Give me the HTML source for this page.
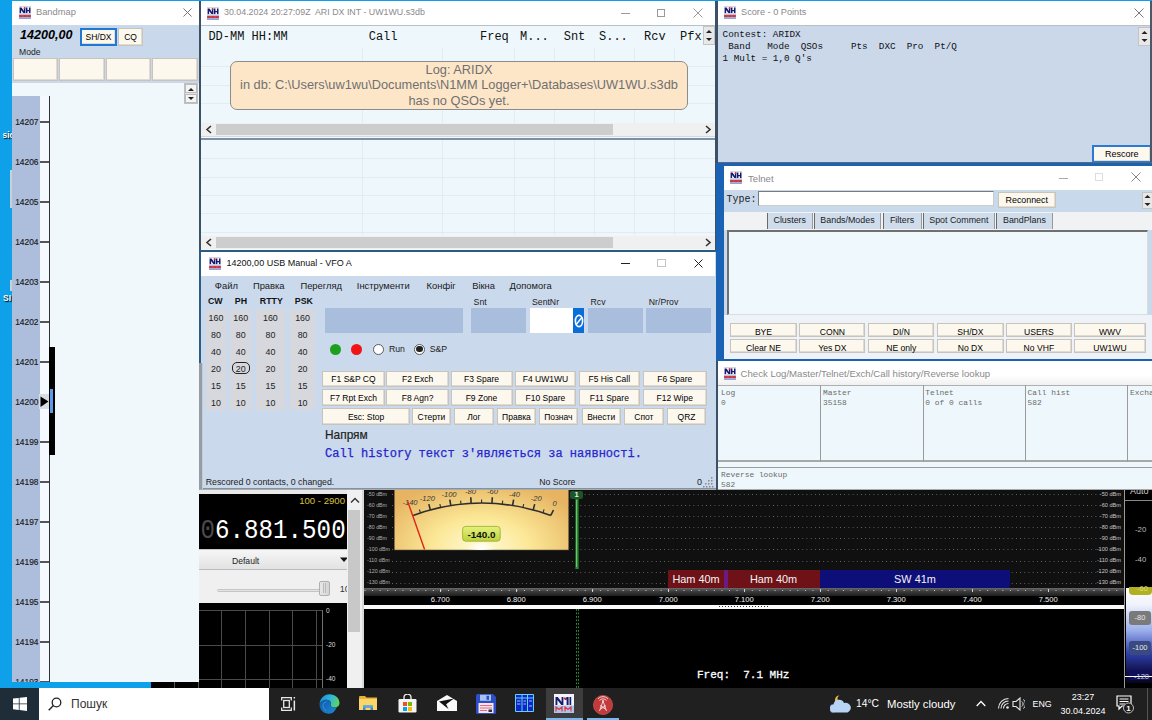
<!DOCTYPE html>
<html><head><meta charset="utf-8">
<style>
*{margin:0;padding:0;box-sizing:border-box}
html,body{width:1152px;height:720px;overflow:hidden}
body{position:relative;background:#0ea0e8;font-family:"Liberation Sans",sans-serif;color:#000}
div,span{position:absolute}
div>svg{display:block}
.m{font-family:"Liberation Mono",monospace}
.tb{background:#fff}
.tt{color:#8a8a8a;font-size:9.2px;white-space:nowrap}
.btn{background:#fcf8ee;border:1px solid #c8c4bc;box-shadow:inset -1px -1px 0 #e0dcd4;text-align:center;white-space:nowrap;color:#000}
.fk{font-size:8.3px;line-height:14px;height:16px}
.p1{padding-top:1px}
.nw{white-space:nowrap}
</style></head><body>

<div class="nw" style="left:2.5px;top:130px;font-size:8.5px;font-weight:bold;color:#fff;text-shadow:1px 1px 1px #000">sic</div>
<div class="nw" style="left:3px;top:293px;font-size:8.5px;font-weight:bold;color:#fff;text-shadow:1px 1px 1px #000">SI</div>
<div style="left:10px;top:170px;width:2px;height:38px;background:#c8d0d8"></div>
<div style="left:10px;top:280px;width:2px;height:11px;background:#c8d0d8"></div>
<!-- ============ BANDMAP ============ -->
<div id="bm" style="left:12px;top:1px;width:187px;height:681px;background:#f0f8fc;overflow:hidden">
  <div class="tb" style="left:0;top:0;width:187px;height:24px"></div>
  <div class="tt" style="left:24px;top:6px;font-size:9.3px">Bandmap</div>
  <div style="left:0;top:24px;width:187px;height:58px;background:#c9d8eb"></div>
  <div class="nw" style="left:8px;top:27px;font-size:12.6px;font-weight:bold;font-style:italic">14200,00</div>
  <div class="btn" style="left:68px;top:27px;width:37px;height:18px;border:2px solid #1e78d6;font-size:8.5px;line-height:14px">SH/DX</div>
  <div class="btn" style="left:106px;top:27px;width:25px;height:18px;font-size:8.5px;line-height:16px">CQ</div>
  <div class="nw" style="left:7px;top:46px;font-size:8.6px;color:#222">Mode</div>
  <div class="btn" style="left:1px;top:57px;width:45px;height:23px"></div>
  <div class="btn" style="left:47px;top:57px;width:46px;height:23px"></div>
  <div class="btn" style="left:94px;top:57px;width:45px;height:23px"></div>
  <div class="btn" style="left:140px;top:57px;width:46px;height:23px"></div>
  <div style="left:0;top:95px;width:28px;height:590px;background:#adbedc"></div>
  <div style="left:28px;top:95px;width:9px;height:590px;background:#f4faff"></div>
  <div style="left:37px;top:95px;width:1px;height:590px;background:#333"></div>
<div style="left:7px;top:5px"><svg width="12" height="13" viewBox="0 0 12 13"><rect width="12" height="13" fill="#f6f6fb"/><rect width="12" height="0.9" fill="#d4d4dc"/><path d="M0.6 7.3V1.6h1.9l2.4 3.3V1.6h1.4v5.7H4.6L2.1 4v3.3z" fill="#141a6e"/><path d="M6.9 7.3V1.6h1.5v2.3h1.6V1.6h1.5v5.7H10V5.3H8.4v2z" fill="#141a6e"/><circle cx="5.6" cy="2.2" r="0.9" fill="#e02a2a"/><rect y="7.3" width="12" height="1.5" fill="#c4d4f0"/><rect y="8.8" width="12" height="2.6" fill="#e04040"/><g fill="#3a3a90"><rect x="1.5" y="9.6" width="1" height="1"/><rect x="5.5" y="9.6" width="1" height="1"/><rect x="9.5" y="9.6" width="1" height="1"/></g><rect y="11.4" width="12" height="1.6" fill="#8aa8e0"/></svg></div>
<svg style="position:absolute;left:171px;top:7px" width="9" height="9"><path d="M0.5 0.5L8.5 8.5M8.5 0.5L0.5 8.5" stroke="#777" stroke-width="1"/></svg>
<div style="left:172px;top:82px;width:14px;height:21px;background:#e4e4e4;border:1px solid #c0c0c0"></div>
<div style="left:173px;top:83px;width:12px;height:9px;background:#f4f4f4;border:1px solid #bbb"></div>
<div style="left:173px;top:93px;width:12px;height:9px;background:#f4f4f4;border:1px solid #bbb"></div>
<svg style="position:absolute;left:175px;top:85px" width="8" height="16"><path d="M1 5L4 2L7 5z" fill="#222"/><path d="M1 11L7 11L4 14z" fill="#222"/></svg>
<div style="left:28px;top:120px;width:9px;height:2px;background:#555"></div>
<div class="nw" style="left:0;top:116px;width:26.5px;text-align:right;font-size:8.4px;line-height:11px;color:#1a1a1a;-webkit-text-stroke:0.15px #1a1a1a">14207</div>
<div style="left:28px;top:160px;width:9px;height:2px;background:#555"></div>
<div class="nw" style="left:0;top:156px;width:26.5px;text-align:right;font-size:8.4px;line-height:11px;color:#1a1a1a;-webkit-text-stroke:0.15px #1a1a1a">14206</div>
<div style="left:28px;top:200px;width:9px;height:2px;background:#555"></div>
<div class="nw" style="left:0;top:196px;width:26.5px;text-align:right;font-size:8.4px;line-height:11px;color:#1a1a1a;-webkit-text-stroke:0.15px #1a1a1a">14205</div>
<div style="left:28px;top:240px;width:9px;height:2px;background:#555"></div>
<div class="nw" style="left:0;top:236px;width:26.5px;text-align:right;font-size:8.4px;line-height:11px;color:#1a1a1a;-webkit-text-stroke:0.15px #1a1a1a">14204</div>
<div style="left:28px;top:280px;width:9px;height:2px;background:#555"></div>
<div class="nw" style="left:0;top:276px;width:26.5px;text-align:right;font-size:8.4px;line-height:11px;color:#1a1a1a;-webkit-text-stroke:0.15px #1a1a1a">14203</div>
<div style="left:28px;top:320px;width:9px;height:2px;background:#555"></div>
<div class="nw" style="left:0;top:316px;width:26.5px;text-align:right;font-size:8.4px;line-height:11px;color:#1a1a1a;-webkit-text-stroke:0.15px #1a1a1a">14202</div>
<div style="left:28px;top:360px;width:9px;height:2px;background:#555"></div>
<div class="nw" style="left:0;top:356px;width:26.5px;text-align:right;font-size:8.4px;line-height:11px;color:#1a1a1a;-webkit-text-stroke:0.15px #1a1a1a">14201</div>
<div style="left:28px;top:400px;width:9px;height:2px;background:#555"></div>
<div class="nw" style="left:0;top:396px;width:26.5px;text-align:right;font-size:8.4px;line-height:11px;color:#1a1a1a;-webkit-text-stroke:0.15px #1a1a1a">14200</div>
<div style="left:28px;top:440px;width:9px;height:2px;background:#555"></div>
<div class="nw" style="left:0;top:436px;width:26.5px;text-align:right;font-size:8.4px;line-height:11px;color:#1a1a1a;-webkit-text-stroke:0.15px #1a1a1a">14199</div>
<div style="left:28px;top:480px;width:9px;height:2px;background:#555"></div>
<div class="nw" style="left:0;top:476px;width:26.5px;text-align:right;font-size:8.4px;line-height:11px;color:#1a1a1a;-webkit-text-stroke:0.15px #1a1a1a">14198</div>
<div style="left:28px;top:520px;width:9px;height:2px;background:#555"></div>
<div class="nw" style="left:0;top:516px;width:26.5px;text-align:right;font-size:8.4px;line-height:11px;color:#1a1a1a;-webkit-text-stroke:0.15px #1a1a1a">14197</div>
<div style="left:28px;top:560px;width:9px;height:2px;background:#555"></div>
<div class="nw" style="left:0;top:556px;width:26.5px;text-align:right;font-size:8.4px;line-height:11px;color:#1a1a1a;-webkit-text-stroke:0.15px #1a1a1a">14196</div>
<div style="left:28px;top:600px;width:9px;height:2px;background:#555"></div>
<div class="nw" style="left:0;top:596px;width:26.5px;text-align:right;font-size:8.4px;line-height:11px;color:#1a1a1a;-webkit-text-stroke:0.15px #1a1a1a">14195</div>
<div style="left:28px;top:640px;width:9px;height:2px;background:#555"></div>
<div class="nw" style="left:0;top:636px;width:26.5px;text-align:right;font-size:8.4px;line-height:11px;color:#1a1a1a;-webkit-text-stroke:0.15px #1a1a1a">14194</div>
<div style="left:28px;top:680px;width:9px;height:2px;background:#555"></div>
<div class="nw" style="left:0;top:676px;width:26.5px;text-align:right;font-size:8.4px;line-height:11px;color:#1a1a1a;-webkit-text-stroke:0.15px #1a1a1a">14193</div>
<div style="left:37px;top:346px;width:6px;height:108px;background:#000"></div>
<div style="left:38px;top:388px;width:3px;height:24px;background:#5a9ae8"></div>
<div style="left:27px;top:393px;width:10px;height:15px;background:#d8dce4"></div>
<svg style="position:absolute;left:28px;top:395px" width="9" height="12"><path d="M0.5 0.5L8.5 5.5L0.5 11z" fill="#000"/></svg>
</div>

<!-- ============ LOG WINDOW ============ -->
<div id="lg" style="left:199px;top:1px;width:518px;height:251px;background:#eef8fc;border:2px solid #3d5166;border-top:0;overflow:hidden">
  <div class="tb" style="left:0;top:0;width:514px;height:25px;border-bottom:1px solid #b8c0c8"></div>
  <div class="tt" style="left:23px;top:6px;font-size:8.85px">30.04.2024 20:27:09Z&nbsp; ARI DX INT - UW1WU.s3db</div>
<div style="left:6px;top:6px"><svg width="12" height="13" viewBox="0 0 12 13"><rect width="12" height="13" fill="#f6f6fb"/><rect width="12" height="0.9" fill="#d4d4dc"/><path d="M0.6 7.3V1.6h1.9l2.4 3.3V1.6h1.4v5.7H4.6L2.1 4v3.3z" fill="#141a6e"/><path d="M6.9 7.3V1.6h1.5v2.3h1.6V1.6h1.5v5.7H10V5.3H8.4v2z" fill="#141a6e"/><circle cx="5.6" cy="2.2" r="0.9" fill="#e02a2a"/><rect y="7.3" width="12" height="1.5" fill="#c4d4f0"/><rect y="8.8" width="12" height="2.6" fill="#e04040"/><g fill="#3a3a90"><rect x="1.5" y="9.6" width="1" height="1"/><rect x="5.5" y="9.6" width="1" height="1"/><rect x="9.5" y="9.6" width="1" height="1"/></g><rect y="11.4" width="12" height="1.6" fill="#8aa8e0"/></svg></div>
<div style="left:420px;top:11.5px;width:8.5px;height:1px;background:#9a9a9a"></div>
<div style="left:455.5px;top:7.5px;width:8.5px;height:8px;border:1px solid #9a9a9a"></div>
<svg style="position:absolute;left:492px;top:7px" width="10" height="10"><path d="M0.5 0.5L9.5 9.5M9.5 0.5L0.5 9.5" stroke="#9a9a9a" stroke-width="1"/></svg>
<div style="left:161px;top:46px;width:1px;height:76px;background:#e3ecf0"></div>
<div style="left:161px;top:139px;width:1px;height:95px;background:#e3ecf0"></div>
<div style="left:241px;top:46px;width:1px;height:76px;background:#e3ecf0"></div>
<div style="left:241px;top:139px;width:1px;height:95px;background:#e3ecf0"></div>
<div style="left:313px;top:46px;width:1px;height:76px;background:#e3ecf0"></div>
<div style="left:313px;top:139px;width:1px;height:95px;background:#e3ecf0"></div>
<div style="left:353px;top:46px;width:1px;height:76px;background:#e3ecf0"></div>
<div style="left:353px;top:139px;width:1px;height:95px;background:#e3ecf0"></div>
<div style="left:393px;top:46px;width:1px;height:76px;background:#e3ecf0"></div>
<div style="left:393px;top:139px;width:1px;height:95px;background:#e3ecf0"></div>
<div style="left:433px;top:46px;width:1px;height:76px;background:#e3ecf0"></div>
<div style="left:433px;top:139px;width:1px;height:95px;background:#e3ecf0"></div>
<div style="left:473px;top:46px;width:1px;height:76px;background:#e3ecf0"></div>
<div style="left:473px;top:139px;width:1px;height:95px;background:#e3ecf0"></div>
<div style="left:0;top:65px;width:514px;height:1px;background:#e3ecf0"></div>
<div style="left:0;top:84px;width:514px;height:1px;background:#e3ecf0"></div>
<div style="left:0;top:102px;width:514px;height:1px;background:#e3ecf0"></div>
<div style="left:0;top:157px;width:514px;height:1px;background:#e3ecf0"></div>
<div style="left:0;top:176px;width:514px;height:1px;background:#e3ecf0"></div>
<div style="left:0;top:194px;width:514px;height:1px;background:#e3ecf0"></div>
<div style="left:0;top:212px;width:514px;height:1px;background:#e3ecf0"></div>
<div style="left:0;top:231px;width:514px;height:1px;background:#e3ecf0"></div>
<div class="m nw" style="left:7.4px;top:30px;font-size:12px;line-height:12px;color:#111">DD-MM HH:MM</div>
<div class="m nw" style="left:167.7px;top:30px;font-size:12px;line-height:12px;color:#111">Call</div>
<div class="m nw" style="left:279.0px;top:30px;font-size:12px;line-height:12px;color:#111">Freq</div>
<div class="m nw" style="left:319.0px;top:30px;font-size:12px;line-height:12px;color:#111">M...</div>
<div class="m nw" style="left:362.7px;top:30px;font-size:12px;line-height:12px;color:#111">Snt</div>
<div class="m nw" style="left:398.0px;top:30px;font-size:12px;line-height:12px;color:#111">S...</div>
<div class="m nw" style="left:443.0px;top:30px;font-size:12px;line-height:12px;color:#111">Rcv</div>
<div class="m nw" style="left:479.0px;top:30px;font-size:12px;line-height:12px;color:#111">Pfx</div>
<div style="left:502px;top:25px;width:12px;height:19px;background:#e8e8e8;border:1px solid #c4c4c4"></div>
<svg style="position:absolute;left:504px;top:27px" width="8" height="16"><path d="M1 5L4 2L7 5z" fill="#222"/><path d="M1 10L7 10L4 13z" fill="#222"/></svg>
<div style="left:29px;top:60px;width:458px;height:49px;background:#fde6c8;border:1.5px solid #8c8c8c;border-radius:7px"></div>
<div class="nw" style="left:29px;top:60px;width:458px;text-align:center;font-size:12.8px;line-height:15.3px;color:#707070;padding-top:1px">Log: ARIDX<br>in db: C:\Users\uw1wu\Documents\N1MM Logger+\Databases\UW1WU.s3db<br>has no QSOs yet.</div>
<div style="left:0;top:122px;width:514px;height:13px;background:#f0f0f0"></div>
<div style="left:15px;top:123px;width:397px;height:11px;background:#cdcdcd"></div>
<svg style="position:absolute;left:4px;top:124px" width="8" height="9"><path d="M6 1L2 4.5L6 8" stroke="#333" stroke-width="1.6" fill="none"/></svg>
<svg style="position:absolute;left:503px;top:124px" width="8" height="9"><path d="M2 1L6 4.5L2 8" stroke="#333" stroke-width="1.6" fill="none"/></svg>
<div style="left:0;top:235px;width:514px;height:13px;background:#f0f0f0"></div>
<div style="left:15px;top:236px;width:397px;height:11px;background:#cdcdcd"></div>
<svg style="position:absolute;left:4px;top:237px" width="8" height="9"><path d="M6 1L2 4.5L6 8" stroke="#333" stroke-width="1.6" fill="none"/></svg>
<svg style="position:absolute;left:503px;top:237px" width="8" height="9"><path d="M2 1L6 4.5L2 8" stroke="#333" stroke-width="1.6" fill="none"/></svg>
<div style="left:0;top:135px;width:514px;height:4px;background:#f4f8fc;border-top:1px solid #d0d8e0;border-bottom:2px solid #7d90a8"></div>
</div>

<!-- ============ ENTRY WINDOW ============ -->
<div id="en" style="left:199px;top:250px;width:517px;height:240px;background:#cbd9ec;border:2px solid #2c5c80;border-right:0;border-bottom-color:#8a9098;overflow:hidden">
  <div class="tb" style="left:0;top:0;width:514px;height:24px"></div>
  <div class="nw" style="left:25.6px;top:6.3px;font-size:9px;color:#111">14200,00 USB Manual - VFO A</div>
<div style="left:8px;top:5px"><svg width="12" height="13" viewBox="0 0 12 13"><rect width="12" height="13" fill="#f6f6fb"/><rect width="12" height="0.9" fill="#d4d4dc"/><path d="M0.6 7.3V1.6h1.9l2.4 3.3V1.6h1.4v5.7H4.6L2.1 4v3.3z" fill="#141a6e"/><path d="M6.9 7.3V1.6h1.5v2.3h1.6V1.6h1.5v5.7H10V5.3H8.4v2z" fill="#141a6e"/><circle cx="5.6" cy="2.2" r="0.9" fill="#e02a2a"/><rect y="7.3" width="12" height="1.5" fill="#c4d4f0"/><rect y="8.8" width="12" height="2.6" fill="#e04040"/><g fill="#3a3a90"><rect x="1.5" y="9.6" width="1" height="1"/><rect x="5.5" y="9.6" width="1" height="1"/><rect x="9.5" y="9.6" width="1" height="1"/></g><rect y="11.4" width="12" height="1.6" fill="#8aa8e0"/></svg></div>
<div style="left:420px;top:11px;width:9px;height:1px;background:#222"></div>
<div style="left:456px;top:7px;width:8.5px;height:8px;border:1px solid #c4c4c4"></div>
<svg style="position:absolute;left:492.5px;top:7px" width="9" height="9"><path d="M0.5 0.5L8.5 8.5M8.5 0.5L0.5 8.5" stroke="#222" stroke-width="1"/></svg>
<div class="nw" style="left:13.8px;top:27.5px;font-size:9.4px;color:#1a1a1a">Файл</div>
<div class="nw" style="left:51.9px;top:27.5px;font-size:9.4px;color:#1a1a1a">Правка</div>
<div class="nw" style="left:99.4px;top:27.5px;font-size:9.4px;color:#1a1a1a">Перегляд</div>
<div class="nw" style="left:155.8px;top:27.5px;font-size:9.4px;color:#1a1a1a">Інструменти</div>
<div class="nw" style="left:225.6px;top:27.5px;font-size:9.4px;color:#1a1a1a">Конфіг</div>
<div class="nw" style="left:271.2px;top:27.5px;font-size:9.4px;color:#1a1a1a">Вікна</div>
<div class="nw" style="left:308.6px;top:27.5px;font-size:9.4px;color:#1a1a1a">Допомога</div>
<div class="nw" style="left:7.0px;top:43.8px;font-size:8.8px;font-weight:bold;color:#111">CW</div>
<div style="left:5.0px;top:57.3px;width:20.0px;height:100.5px;background:#d6d8de"></div>
<div class="nw" style="left:1.0px;top:59.6px;width:28.0px;text-align:center;font-size:8.9px;line-height:12px;color:#222">160</div>
<div class="nw" style="left:1.0px;top:76.6px;width:28.0px;text-align:center;font-size:8.9px;line-height:12px;color:#222">80</div>
<div class="nw" style="left:1.0px;top:93.6px;width:28.0px;text-align:center;font-size:8.9px;line-height:12px;color:#222">40</div>
<div class="nw" style="left:1.0px;top:110.6px;width:28.0px;text-align:center;font-size:8.9px;line-height:12px;color:#222">20</div>
<div class="nw" style="left:1.0px;top:127.6px;width:28.0px;text-align:center;font-size:8.9px;line-height:12px;color:#222">15</div>
<div class="nw" style="left:1.0px;top:144.6px;width:28.0px;text-align:center;font-size:8.9px;line-height:12px;color:#222">10</div>
<div class="nw" style="left:33.8px;top:43.8px;font-size:8.8px;font-weight:bold;color:#111">PH</div>
<div style="left:29.4px;top:57.3px;width:20.6px;height:100.5px;background:#d6d8de"></div>
<div class="nw" style="left:25.4px;top:59.6px;width:28.6px;text-align:center;font-size:8.9px;line-height:12px;color:#222">160</div>
<div class="nw" style="left:25.4px;top:76.6px;width:28.6px;text-align:center;font-size:8.9px;line-height:12px;color:#222">80</div>
<div class="nw" style="left:25.4px;top:93.6px;width:28.6px;text-align:center;font-size:8.9px;line-height:12px;color:#222">40</div>
<div class="nw" style="left:25.4px;top:110.6px;width:28.6px;text-align:center;font-size:8.9px;line-height:12px;color:#222">20</div>
<div class="nw" style="left:25.4px;top:127.6px;width:28.6px;text-align:center;font-size:8.9px;line-height:12px;color:#222">15</div>
<div class="nw" style="left:25.4px;top:144.6px;width:28.6px;text-align:center;font-size:8.9px;line-height:12px;color:#222">10</div>
<div class="nw" style="left:58.8px;top:43.8px;font-size:8.8px;font-weight:bold;color:#111">RTTY</div>
<div style="left:55.0px;top:57.3px;width:28.8px;height:100.5px;background:#d6d8de"></div>
<div class="nw" style="left:51.0px;top:59.6px;width:36.8px;text-align:center;font-size:8.9px;line-height:12px;color:#222">160</div>
<div class="nw" style="left:51.0px;top:76.6px;width:36.8px;text-align:center;font-size:8.9px;line-height:12px;color:#222">80</div>
<div class="nw" style="left:51.0px;top:93.6px;width:36.8px;text-align:center;font-size:8.9px;line-height:12px;color:#222">40</div>
<div class="nw" style="left:51.0px;top:110.6px;width:36.8px;text-align:center;font-size:8.9px;line-height:12px;color:#222">20</div>
<div class="nw" style="left:51.0px;top:127.6px;width:36.8px;text-align:center;font-size:8.9px;line-height:12px;color:#222">15</div>
<div class="nw" style="left:51.0px;top:144.6px;width:36.8px;text-align:center;font-size:8.9px;line-height:12px;color:#222">10</div>
<div class="nw" style="left:93.8px;top:43.8px;font-size:8.8px;font-weight:bold;color:#111">PSK</div>
<div style="left:89.4px;top:57.3px;width:24.4px;height:100.5px;background:#d6d8de"></div>
<div class="nw" style="left:85.4px;top:59.6px;width:32.4px;text-align:center;font-size:8.9px;line-height:12px;color:#222">160</div>
<div class="nw" style="left:85.4px;top:76.6px;width:32.4px;text-align:center;font-size:8.9px;line-height:12px;color:#222">80</div>
<div class="nw" style="left:85.4px;top:93.6px;width:32.4px;text-align:center;font-size:8.9px;line-height:12px;color:#222">40</div>
<div class="nw" style="left:85.4px;top:110.6px;width:32.4px;text-align:center;font-size:8.9px;line-height:12px;color:#222">20</div>
<div class="nw" style="left:85.4px;top:127.6px;width:32.4px;text-align:center;font-size:8.9px;line-height:12px;color:#222">15</div>
<div class="nw" style="left:85.4px;top:144.6px;width:32.4px;text-align:center;font-size:8.9px;line-height:12px;color:#222">10</div>
<div style="left:31px;top:110px;width:18px;height:12px;border:1px solid #222;border-radius:5px"></div>
<div style="left:124.0px;top:56px;width:138.2px;height:25px;background:#a9bedd"></div>
<div style="left:270.0px;top:56px;width:55.0px;height:25px;background:#a9bedd"></div>
<div style="left:328.5px;top:56px;width:43.5px;height:25px;background:#ffffff"></div>
<div style="left:372.0px;top:56px;width:11.0px;height:25px;background:#0a6ed8"></div>
<div style="left:387.0px;top:56px;width:55.0px;height:25px;background:#a9bedd"></div>
<div style="left:445.2px;top:56px;width:65.1px;height:25px;background:#a9bedd"></div>
<svg style="position:absolute;left:373px;top:62px" width="10" height="14"><ellipse cx="5" cy="7" rx="3.6" ry="5.6" fill="none" stroke="#fff" stroke-width="1.6"/><path d="M1.8 11L8.2 3" stroke="#fff" stroke-width="1.4"/></svg>
<div class="nw" style="left:272.6px;top:44.5px;font-size:8.7px;color:#222">Snt</div>
<div class="nw" style="left:331.0px;top:44.5px;font-size:8.7px;color:#222">SentNr</div>
<div class="nw" style="left:389.6px;top:44.5px;font-size:8.7px;color:#222">Rcv</div>
<div class="nw" style="left:447.8px;top:44.5px;font-size:8.7px;color:#222">Nr/Prov</div>
<div style="left:128.9px;top:91.5px;width:11px;height:11px;border-radius:50%;background:#1ea01e"></div>
<div style="left:150.3px;top:91.5px;width:11px;height:11px;border-radius:50%;background:#f01414"></div>
<div style="left:172px;top:91.5px;width:11px;height:11px;border-radius:50%;background:#fff;border:1.2px solid #5a5a5a"></div>
<div style="left:213px;top:91.5px;width:11px;height:11px;border-radius:50%;background:#fff;border:1.2px solid #5a5a5a"></div>
<div style="left:215.3px;top:93.8px;width:6.4px;height:6.4px;border-radius:50%;background:#222"></div>
<div class="nw" style="left:188px;top:92px;font-size:8.7px;color:#222">Run</div>
<div class="nw" style="left:228.7px;top:92px;font-size:8.7px;color:#222">S&amp;P</div>
<div class="btn p1" style="left:121.4px;top:119.2px;width:62.2px;height:15.8px;font-size:8.5px;line-height:13.8px">F1 S&amp;P CQ</div>
<div class="btn p1" style="left:185.3px;top:119.2px;width:62.5px;height:15.8px;font-size:8.5px;line-height:13.8px">F2 Exch</div>
<div class="btn p1" style="left:249.5px;top:119.2px;width:62.0px;height:15.8px;font-size:8.5px;line-height:13.8px">F3 Spare</div>
<div class="btn p1" style="left:313.5px;top:119.2px;width:61.8px;height:15.8px;font-size:8.5px;line-height:13.8px">F4 UW1WU</div>
<div class="btn p1" style="left:377.8px;top:119.2px;width:61.1px;height:15.8px;font-size:8.5px;line-height:13.8px">F5 His Call</div>
<div class="btn p1" style="left:442.0px;top:119.2px;width:63.5px;height:15.8px;font-size:8.5px;line-height:13.8px">F6 Spare</div>
<div class="btn p1" style="left:121.4px;top:137.4px;width:62.2px;height:16.6px;font-size:8.5px;line-height:14.600000000000001px">F7 Rpt Exch</div>
<div class="btn p1" style="left:185.3px;top:137.4px;width:62.5px;height:16.6px;font-size:8.5px;line-height:14.600000000000001px">F8 Agn?</div>
<div class="btn p1" style="left:249.5px;top:137.4px;width:62.0px;height:16.6px;font-size:8.5px;line-height:14.600000000000001px">F9 Zone</div>
<div class="btn p1" style="left:313.5px;top:137.4px;width:61.8px;height:16.6px;font-size:8.5px;line-height:14.600000000000001px">F10 Spare</div>
<div class="btn p1" style="left:377.8px;top:137.4px;width:61.1px;height:16.6px;font-size:8.5px;line-height:14.600000000000001px">F11 Spare</div>
<div class="btn p1" style="left:442.0px;top:137.4px;width:63.5px;height:16.6px;font-size:8.5px;line-height:14.600000000000001px">F12 Wipe</div>
<div class="btn p1" style="left:121.4px;top:156.2px;width:87.4px;height:16.5px;font-size:8.5px;line-height:14.5px">Esc: Stop</div>
<div class="btn p1" style="left:210.5px;top:156.2px;width:39.9px;height:16.5px;font-size:8.5px;line-height:14.5px">Стерти</div>
<div class="btn p1" style="left:252.7px;top:156.2px;width:40.6px;height:16.5px;font-size:8.5px;line-height:14.5px">Лог</div>
<div class="btn p1" style="left:295.5px;top:156.2px;width:39.9px;height:16.5px;font-size:8.5px;line-height:14.5px">Правка</div>
<div class="btn p1" style="left:337.8px;top:156.2px;width:39.2px;height:16.5px;font-size:8.5px;line-height:14.5px">Познач</div>
<div class="btn p1" style="left:380.5px;top:156.2px;width:39.3px;height:16.5px;font-size:8.5px;line-height:14.5px">Внести</div>
<div class="btn p1" style="left:423.0px;top:156.2px;width:39.8px;height:16.5px;font-size:8.5px;line-height:14.5px">Спот</div>
<div class="btn p1" style="left:465.6px;top:156.2px;width:39.9px;height:16.5px;font-size:8.5px;line-height:14.5px">QRZ</div>
<div class="nw" style="left:124px;top:175.5px;font-size:11.9px;color:#222;-webkit-text-stroke:0.2px #222">Напрям</div>
<div class="m nw" style="left:124px;top:194.5px;font-size:12px;color:#2626cc;-webkit-text-stroke:0.25px #2626cc">Call history текст з'являється за наявності.</div>
<div class="nw" style="left:4.7px;top:225px;font-size:8.8px;color:#222">Rescored 0 contacts, 0 changed.</div>
<div class="nw" style="left:338.2px;top:225px;font-size:8.7px;color:#222">No Score</div>
<div class="nw" style="left:496px;top:225px;font-size:9px;color:#222">0</div>
<svg style="position:absolute;left:502px;top:225px" width="11" height="11"><g fill="#8a8a8a"><rect x="8" y="0" width="1.5" height="1.5"/><rect x="5" y="3" width="1.5" height="1.5"/><rect x="8" y="3" width="1.5" height="1.5"/><rect x="2" y="6" width="1.5" height="1.5"/><rect x="5" y="6" width="1.5" height="1.5"/><rect x="8" y="6" width="1.5" height="1.5"/><rect x="0" y="9" width="1.5" height="1.5"/><rect x="3" y="9" width="1.5" height="1.5"/><rect x="6" y="9" width="1.5" height="1.5"/><rect x="9" y="9" width="1.5" height="1.5"/></g></svg>
</div>

<div style="left:199px;top:363px;width:4px;height:127px;background:#959ca4;border-right:1px solid #c4ccd4"></div>
<div style="left:199px;top:489px;width:517px;height:1px;background:#a4acb4"></div>
<!-- ============ SCORE ============ -->
<div id="sc" style="left:716px;top:1px;width:436px;height:163px;background:#cad8ea;border-left:2px solid #3d5166;overflow:hidden">
  <div class="tb" style="left:0;top:0;width:436px;height:25px;border-bottom:1px solid #b8c0c8"></div>
  <div class="tt" style="left:23px;top:6px">Score - 0 Points</div>
<div style="left:6px;top:5px"><svg width="12" height="13" viewBox="0 0 12 13"><rect width="12" height="13" fill="#f6f6fb"/><rect width="12" height="0.9" fill="#d4d4dc"/><path d="M0.6 7.3V1.6h1.9l2.4 3.3V1.6h1.4v5.7H4.6L2.1 4v3.3z" fill="#141a6e"/><path d="M6.9 7.3V1.6h1.5v2.3h1.6V1.6h1.5v5.7H10V5.3H8.4v2z" fill="#141a6e"/><circle cx="5.6" cy="2.2" r="0.9" fill="#e02a2a"/><rect y="7.3" width="12" height="1.5" fill="#c4d4f0"/><rect y="8.8" width="12" height="2.6" fill="#e04040"/><g fill="#3a3a90"><rect x="1.5" y="9.6" width="1" height="1"/><rect x="5.5" y="9.6" width="1" height="1"/><rect x="9.5" y="9.6" width="1" height="1"/></g><rect y="11.4" width="12" height="1.6" fill="#8aa8e0"/></svg></div>
<svg style="position:absolute;left:416px;top:7px" width="10" height="10"><path d="M0.5 0.5L9.5 9.5M9.5 0.5L0.5 9.5" stroke="#777" stroke-width="1"/></svg>
<div class="m" style="left:4.6px;top:27.9px;font-size:9.3px;line-height:12px;color:#111;white-space:pre">Contest: ARIDX
 Band   Mode  QSOs     Pts  DXC  Pro  Pt/Q
1 Mult = 1,0 Q's</div>
<div style="left:420px;top:26px;width:13px;height:19px;background:#e8e8e8;border:1px solid #c4c4c4"></div>
<svg style="position:absolute;left:422px;top:28px" width="9" height="16"><path d="M1.5 5L4.5 2L7.5 5z" fill="#222"/><path d="M1.5 10L7.5 10L4.5 13z" fill="#222"/></svg>
<div class="btn" style="left:373.8px;top:144px;width:60px;height:18px;border:2px solid #2a7ad6;font-size:9px;line-height:14px">Rescore</div>
</div>

<div style="left:1150px;top:1px;width:2px;height:162px;background:#4a5868"></div>
<div style="left:718px;top:161.5px;width:434px;height:1.5px;background:#5a6a7a"></div>
<!-- ============ TELNET ============ -->
<div id="tn" style="left:716px;top:163px;width:436px;height:198px;background:#1a62b4;overflow:hidden">
  <div style="left:8px;top:3px;width:428px;height:193px;background:#c9d9ec"></div>
  <div class="tb" style="left:8px;top:3px;width:428px;height:24px"></div>
  <div class="tt" style="left:32px;top:10px;font-size:9.6px">Telnet</div>
<div style="left:14.3px;top:7.8px"><svg width="12" height="13" viewBox="0 0 12 13"><rect width="12" height="13" fill="#f6f6fb"/><rect width="12" height="0.9" fill="#d4d4dc"/><path d="M0.6 7.3V1.6h1.9l2.4 3.3V1.6h1.4v5.7H4.6L2.1 4v3.3z" fill="#141a6e"/><path d="M6.9 7.3V1.6h1.5v2.3h1.6V1.6h1.5v5.7H10V5.3H8.4v2z" fill="#141a6e"/><circle cx="5.6" cy="2.2" r="0.9" fill="#e02a2a"/><rect y="7.3" width="12" height="1.5" fill="#c4d4f0"/><rect y="8.8" width="12" height="2.6" fill="#e04040"/><g fill="#3a3a90"><rect x="1.5" y="9.6" width="1" height="1"/><rect x="5.5" y="9.6" width="1" height="1"/><rect x="9.5" y="9.6" width="1" height="1"/></g><rect y="11.4" width="12" height="1.6" fill="#8aa8e0"/></svg></div>
<div style="left:342.5px;top:15px;width:9px;height:1px;background:#aaa"></div>
<div style="left:378.5px;top:10px;width:8px;height:8px;border:1px solid #ddd"></div>
<svg style="position:absolute;left:414.5px;top:9px" width="10" height="10"><path d="M0.5 0.5L9.5 9.5M9.5 0.5L0.5 9.5" stroke="#888" stroke-width="1"/></svg>
<div class="m nw" style="left:10.6px;top:30.7px;font-size:10px;color:#222">Type:</div>
<div style="left:42.4px;top:28px;width:236px;height:15.2px;background:#fff;border:1px solid #7a7a7a;border-right-color:#ccc;border-bottom-color:#ccc"></div>
<div class="btn" style="left:282px;top:29.2px;width:57.5px;height:16.2px;font-size:8.9px;line-height:14px">Reconnect</div>
<div style="left:425.8px;top:29px;width:11px;height:17px;background:#e8e8e8;border:1px solid #c4c4c4"></div>
<svg style="position:absolute;left:427px;top:30px" width="9" height="16"><path d="M1.5 5L4.5 2L7.5 5z" fill="#222"/><path d="M1.5 10L7.5 10L4.5 13z" fill="#222"/></svg>
<div style="left:8px;top:49px;width:428px;height:18px;background:#f0f2f4"></div>
<div class="nw" style="left:51.0px;top:50px;width:45.5px;height:16px;background:#cfdcec;border-left:1.5px solid #6a6a6a;border-right:1px solid #9a9a9a;text-align:center;font-size:8.9px;line-height:15px;color:#222">Clusters</div>
<div class="nw" style="left:97.6px;top:50px;width:67.8px;height:16px;background:#cfdcec;border-left:1.5px solid #6a6a6a;border-right:1px solid #9a9a9a;text-align:center;font-size:8.9px;line-height:15px;color:#222">Bands/Modes</div>
<div class="nw" style="left:166.5px;top:50px;width:39.0px;height:16px;background:#cfdcec;border-left:1.5px solid #6a6a6a;border-right:1px solid #9a9a9a;text-align:center;font-size:8.9px;line-height:15px;color:#222">Filters</div>
<div class="nw" style="left:206.7px;top:50px;width:72.3px;height:16px;background:#cfdcec;border-left:1.5px solid #6a6a6a;border-right:1px solid #9a9a9a;text-align:center;font-size:8.9px;line-height:15px;color:#222">Spot Comment</div>
<div class="nw" style="left:280.0px;top:50px;width:56.9px;height:16px;background:#cfdcec;border-left:1.5px solid #6a6a6a;border-right:1px solid #9a9a9a;text-align:center;font-size:8.9px;line-height:15px;color:#222">BandPlans</div>
<div style="left:8px;top:152px;width:428px;height:44px;background:#edf3f8"></div>
<div style="left:11.4px;top:67px;width:421px;height:85.2px;background:#eef8fd;border-left:2px solid #707070;border-top:2px solid #707070;border-right:1px solid #ddd;border-bottom:1px solid #ddd"></div>
<div class="btn" style="left:14.4px;top:160.3px;width:66.2px;height:14px;font-size:8.6px;line-height:12px;padding-top:1.5px">BYE</div>
<div class="btn" style="left:83.3px;top:160.3px;width:66.2px;height:14px;font-size:8.6px;line-height:12px;padding-top:1.5px">CONN</div>
<div class="btn" style="left:152.2px;top:160.3px;width:66.2px;height:14px;font-size:8.6px;line-height:12px;padding-top:1.5px">DI/N</div>
<div class="btn" style="left:221.0px;top:160.3px;width:66.7px;height:14px;font-size:8.6px;line-height:12px;padding-top:1.5px">SH/DX</div>
<div class="btn" style="left:290.0px;top:160.3px;width:65.8px;height:14px;font-size:8.6px;line-height:12px;padding-top:1.5px">USERS</div>
<div class="btn" style="left:358.4px;top:160.3px;width:71.2px;height:14px;font-size:8.6px;line-height:12px;padding-top:1.5px">WWV</div>
<div class="btn" style="left:14.4px;top:176.1px;width:66.2px;height:14.3px;font-size:8.6px;line-height:12px;padding-top:2px">Clear NE</div>
<div class="btn" style="left:83.3px;top:176.1px;width:66.2px;height:14.3px;font-size:8.6px;line-height:12px;padding-top:2px">Yes DX</div>
<div class="btn" style="left:152.2px;top:176.1px;width:66.2px;height:14.3px;font-size:8.6px;line-height:12px;padding-top:2px">NE only</div>
<div class="btn" style="left:221.0px;top:176.1px;width:66.7px;height:14.3px;font-size:8.6px;line-height:12px;padding-top:2px">No DX</div>
<div class="btn" style="left:290.0px;top:176.1px;width:65.8px;height:14.3px;font-size:8.6px;line-height:12px;padding-top:2px">No VHF</div>
<div class="btn" style="left:358.4px;top:176.1px;width:71.2px;height:14.3px;font-size:8.6px;line-height:12px;padding-top:2px">UW1WU</div>
</div>

<!-- ============ CHECK ============ -->
<div id="ck" style="left:716px;top:361px;width:436px;height:129px;background:#eef8fc;border-left:2px solid #3d5166;overflow:hidden">
  <div class="tb" style="left:0;top:0;width:436px;height:24.4px;background:linear-gradient(#fff 60%,#f0f0f0)"></div>
  <div class="tt" style="left:22.6px;top:6.5px;font-size:9.6px">Check Log/Master/Telnet/Exch/Call history/Reverse lookup</div>
<div style="left:5.8px;top:5.5px"><svg width="12" height="13" viewBox="0 0 12 13"><rect width="12" height="13" fill="#f6f6fb"/><rect width="12" height="0.9" fill="#d4d4dc"/><path d="M0.6 7.3V1.6h1.9l2.4 3.3V1.6h1.4v5.7H4.6L2.1 4v3.3z" fill="#141a6e"/><path d="M6.9 7.3V1.6h1.5v2.3h1.6V1.6h1.5v5.7H10V5.3H8.4v2z" fill="#141a6e"/><circle cx="5.6" cy="2.2" r="0.9" fill="#e02a2a"/><rect y="7.3" width="12" height="1.5" fill="#c4d4f0"/><rect y="8.8" width="12" height="2.6" fill="#e04040"/><g fill="#3a3a90"><rect x="1.5" y="9.6" width="1" height="1"/><rect x="5.5" y="9.6" width="1" height="1"/><rect x="9.5" y="9.6" width="1" height="1"/></g><rect y="11.4" width="12" height="1.6" fill="#8aa8e0"/></svg></div>
<div style="left:0;top:24.4px;width:436px;height:77px;background:#eef8fc;border-top:1px solid #b0b0b0;border-bottom:2px solid #a8a8a8"></div>
<div style="left:102.0px;top:24.4px;width:1px;height:76.6px;background:#9a9a9a"></div>
<div style="left:204.7px;top:24.4px;width:1px;height:76.6px;background:#9a9a9a"></div>
<div style="left:307.2px;top:24.4px;width:1px;height:76.6px;background:#9a9a9a"></div>
<div style="left:409.4px;top:24.4px;width:1px;height:76.6px;background:#9a9a9a"></div>
<div class="m" style="left:3.0px;top:26.5px;font-size:7.9px;line-height:10.6px;color:#6a6a6a;white-space:pre">Log
0</div>
<div class="m" style="left:105.1px;top:26.5px;font-size:7.9px;line-height:10.6px;color:#6a6a6a;white-space:pre">Master
35158</div>
<div class="m" style="left:207.3px;top:26.5px;font-size:7.9px;line-height:10.6px;color:#6a6a6a;white-space:pre">Telnet
0 of 0 calls</div>
<div class="m" style="left:309.5px;top:26.5px;font-size:7.9px;line-height:10.6px;color:#6a6a6a;white-space:pre">Call hist
582</div>
<div class="m" style="left:412.0px;top:26.5px;font-size:7.9px;line-height:10.6px;color:#6a6a6a;white-space:pre">Excha</div>
<div style="left:0;top:105.5px;width:436px;height:1.2px;background:#9c9c9c"></div>
<div style="left:0;top:127.6px;width:436px;height:1.4px;background:#a8a8a8"></div>
<div class="m" style="left:3px;top:108.8px;font-size:7.9px;line-height:10.4px;color:#6a6a6a;white-space:pre">Reverse lookup
582</div>
</div>

<!-- ============ SDR ============ -->
<div id="sdr" style="left:199px;top:490px;width:953px;height:198px;background:#000;overflow:hidden">
<div style="left:0;top:0;width:163px;height:4.3px;background:#e9e9e9"></div>
<div style="left:0;top:4.3px;width:148px;height:55px;background:#000"></div>
<div class="nw" style="left:0;top:4.8px;width:146px;text-align:right;font-size:9.6px;color:#d8c040">100 - 2900</div>
<div class="m nw" style="left:1.5px;top:26.5px;font-size:24.2px;line-height:24px;color:#fff;letter-spacing:0;transform:scaleY(1.16);transform-origin:0 0"><span style="position:static;color:#4a4a4a">0</span>6.881.500</div>
<div style="left:0;top:59px;width:148px;height:21px;background:linear-gradient(#f6f6f6,#e2e2e2);border-top:1px solid #c8c8c8;border-bottom:1px solid #bcbcbc"></div>
<div class="nw" style="left:33px;top:66px;font-size:8.6px;color:#222">Default</div>
<svg style="position:absolute;left:141px;top:67px" width="8" height="6"><path d="M0 0.5H8L4 5z" fill="#111"/></svg>
<div style="left:0;top:80px;width:148px;height:33px;background:#f0f0f0"></div>
<div style="left:18px;top:98.5px;width:112px;height:3px;background:#e4e4e4;border:1px solid #c4c4c4;border-radius:2px"></div>
<div style="left:119.5px;top:90.7px;width:11.5px;height:15px;background:linear-gradient(90deg,#e8e8e8,#d4d4d4);border:1px solid #b0b0b0;border-radius:2px"></div>
<div style="left:123.5px;top:93px;width:1px;height:10px;background:#bbb"></div><div style="left:126px;top:93px;width:1px;height:10px;background:#bbb"></div>
<div class="nw" style="left:140.7px;top:94px;font-size:9px;color:#333">10</div>
<div style="left:0;top:113px;width:148px;height:85px;background:#000"></div>
<div style="left:22.0px;top:120.0px;width:1px;height:80px;background:#4a4a4a"></div>
<div style="left:45.5px;top:120.0px;width:1px;height:80px;background:#4a4a4a"></div>
<div style="left:69.5px;top:120.0px;width:1px;height:80px;background:#4a4a4a"></div>
<div style="left:92.8px;top:120.0px;width:1px;height:80px;background:#4a4a4a"></div>
<div style="left:116.5px;top:120.0px;width:1px;height:80px;background:#4a4a4a"></div>
<div style="left:0;top:120.0px;width:123.0px;height:1px;background:#4a4a4a"></div>
<div style="left:123.0px;top:120.0px;width:1px;height:80px;background:#707070"></div>
<div style="left:0;top:155.0px;width:123.0px;height:1px;background:#4a4a4a"></div>
<div style="left:0;top:188.8px;width:123.0px;height:1px;background:#4a4a4a"></div>
<div class="nw" style="left:127.0px;top:116.5px;font-size:6.5px;color:#ddd">0</div>
<div class="nw" style="left:127.0px;top:150.5px;font-size:6.5px;color:#ddd">-20</div>
<div class="nw" style="left:127.0px;top:184.5px;font-size:6.5px;color:#ddd">-40</div>
<div style="left:148px;top:0;width:15px;height:198px;background:#f0f0f0"></div>
<div style="left:148.5px;top:20.0px;width:12.5px;height:122px;background:#c8c8c8"></div>
<svg style="position:absolute;left:150.5px;top:7px" width="10" height="7"><path d="M1 5.5L5 1.5L9 5.5" stroke="#333" stroke-width="1.4" fill="none"/></svg>
<div style="left:165.0px;top:0;width:760px;height:98px;background:#101010"></div>
<div style="left:193.0px;top:4.1px;width:712px;height:1px;background-image:linear-gradient(90deg,#6a6a6a 1px,transparent 1px);background-size:4.2px 1px"></div>
<div class="nw" style="left:168.0px;top:0.6px;font-size:5.3px;color:#b0b0b0">-50 dBm</div>
<div class="nw" style="left:891.0px;top:0.6px;width:31px;text-align:right;font-size:5.6px;color:#c8c8c8">-50 dBm</div>
<div style="left:193.0px;top:15.2px;width:712px;height:1px;background-image:linear-gradient(90deg,#6a6a6a 1px,transparent 1px);background-size:4.2px 1px"></div>
<div class="nw" style="left:168.0px;top:11.7px;font-size:5.3px;color:#b0b0b0">-60 dBm</div>
<div class="nw" style="left:891.0px;top:11.7px;width:31px;text-align:right;font-size:5.6px;color:#c8c8c8">-60 dBm</div>
<div style="left:193.0px;top:26.2px;width:712px;height:1px;background-image:linear-gradient(90deg,#6a6a6a 1px,transparent 1px);background-size:4.2px 1px"></div>
<div class="nw" style="left:168.0px;top:22.7px;font-size:5.3px;color:#b0b0b0">-70 dBm</div>
<div class="nw" style="left:891.0px;top:22.7px;width:31px;text-align:right;font-size:5.6px;color:#c8c8c8">-70 dBm</div>
<div style="left:193.0px;top:37.3px;width:712px;height:1px;background-image:linear-gradient(90deg,#6a6a6a 1px,transparent 1px);background-size:4.2px 1px"></div>
<div class="nw" style="left:168.0px;top:33.8px;font-size:5.3px;color:#b0b0b0">-80 dBm</div>
<div class="nw" style="left:891.0px;top:33.8px;width:31px;text-align:right;font-size:5.6px;color:#c8c8c8">-80 dBm</div>
<div style="left:193.0px;top:48.3px;width:712px;height:1px;background-image:linear-gradient(90deg,#6a6a6a 1px,transparent 1px);background-size:4.2px 1px"></div>
<div class="nw" style="left:168.0px;top:44.8px;font-size:5.3px;color:#b0b0b0">-90 dBm</div>
<div class="nw" style="left:891.0px;top:44.8px;width:31px;text-align:right;font-size:5.6px;color:#c8c8c8">-90 dBm</div>
<div style="left:193.0px;top:59.4px;width:712px;height:1px;background-image:linear-gradient(90deg,#6a6a6a 1px,transparent 1px);background-size:4.2px 1px"></div>
<div class="nw" style="left:168.0px;top:55.9px;font-size:5.3px;color:#b0b0b0">-100 dBm</div>
<div class="nw" style="left:891.0px;top:55.9px;width:31px;text-align:right;font-size:5.6px;color:#c8c8c8">-100 dBm</div>
<div style="left:193.0px;top:70.5px;width:712px;height:1px;background-image:linear-gradient(90deg,#6a6a6a 1px,transparent 1px);background-size:4.2px 1px"></div>
<div class="nw" style="left:168.0px;top:67.0px;font-size:5.3px;color:#b0b0b0">-110 dBm</div>
<div class="nw" style="left:891.0px;top:67.0px;width:31px;text-align:right;font-size:5.6px;color:#c8c8c8">-110 dBm</div>
<div style="left:193.0px;top:81.5px;width:712px;height:1px;background-image:linear-gradient(90deg,#6a6a6a 1px,transparent 1px);background-size:4.2px 1px"></div>
<div class="nw" style="left:168.0px;top:78.0px;font-size:5.3px;color:#b0b0b0">-120 dBm</div>
<div class="nw" style="left:891.0px;top:78.0px;width:31px;text-align:right;font-size:5.6px;color:#c8c8c8">-120 dBm</div>
<div style="left:193.0px;top:92.6px;width:712px;height:1px;background-image:linear-gradient(90deg,#6a6a6a 1px,transparent 1px);background-size:4.2px 1px"></div>
<div class="nw" style="left:168.0px;top:89.1px;font-size:5.3px;color:#b0b0b0">-130 dBm</div>
<div class="nw" style="left:891.0px;top:89.1px;width:31px;text-align:right;font-size:5.6px;color:#c8c8c8">-130 dBm</div>
<div style="left:468.7px;top:80.4px;width:56.3px;height:17.6px;background:#6e1218"></div>
<div style="left:525.0px;top:80.4px;width:3.5px;height:17.6px;background:#6a1a80"></div>
<div style="left:528.5px;top:80.4px;width:92.3px;height:17.6px;background:#6e1218"></div>
<div style="left:620.8px;top:80.4px;width:190.2px;height:17.6px;background:#0e0e78"></div>
<div class="nw" style="left:457.0px;top:82.5px;width:80px;text-align:center;font-size:10.9px;color:#f4f4f4">Ham 40m</div>
<div class="nw" style="left:534.5px;top:82.5px;width:80px;text-align:center;font-size:10.9px;color:#f4f4f4">Ham 40m</div>
<div class="nw" style="left:676.0px;top:82.5px;width:80px;text-align:center;font-size:10.9px;color:#f4f4f4">SW 41m</div>
<svg style="position:absolute;left:195.0px;top:0" width="176" height="61" viewBox="394 490 176 61">
<defs><radialGradient id="g1" cx="481" cy="548" r="110" fx="481" fy="548" gradientUnits="userSpaceOnUse" gradientTransform="translate(481 548) scale(1 0.62) translate(-481 -548)">
<stop offset="0" stop-color="#fffbd8"/><stop offset="0.45" stop-color="#fbe796"/><stop offset="1" stop-color="#e6b462"/></radialGradient>
<radialGradient id="g2" cx="481" cy="550" r="14" gradientUnits="userSpaceOnUse"><stop offset="0" stop-color="#fff" stop-opacity="0.95"/><stop offset="1" stop-color="#fff" stop-opacity="0"/></radialGradient>
<linearGradient id="g3" x1="0" y1="0" x2="0" y2="1"><stop offset="0" stop-color="#e4f27a"/><stop offset="1" stop-color="#bcd23e"/></linearGradient></defs>
<rect x="394" y="489" width="175" height="61.3" fill="url(#g1)" stroke="#1a1a1a" stroke-width="1"/>
<clipPath id="cp1"><rect x="394" y="489" width="175" height="61"/></clipPath><ellipse cx="481" cy="550" rx="14" ry="7" fill="url(#g2)" clip-path="url(#cp1)"/>
<path d="M413.1 515.4 Q481.5 490.6 550.8 515.4" fill="none" stroke="#2e2e2e" stroke-width="1.6"/>
<path d="M550.8 515.4 L553.5 510" fill="none" stroke="#2e2e2e" stroke-width="1.6"/>
<path d="M430.4 509.9 L428.8 504.1" stroke="#2e2e2e" stroke-width="1.6"/>
<text x="427.4" y="501.3" text-anchor="middle" font-family="Liberation Sans" font-style="italic" font-size="7.6" fill="#3a3a3a">-120</text>
<path d="M450.8 505.5 L449.8 499.6" stroke="#2e2e2e" stroke-width="1.6"/>
<text x="449.0" y="496.7" text-anchor="middle" font-family="Liberation Sans" font-style="italic" font-size="7.6" fill="#3a3a3a">-100</text>
<path d="M471.1 503.3 L470.8 497.3" stroke="#2e2e2e" stroke-width="1.6"/>
<text x="470.5" y="494.3" text-anchor="middle" font-family="Liberation Sans" font-style="italic" font-size="7.6" fill="#3a3a3a">-80</text>
<path d="M492.0 503.3 L492.3 497.3" stroke="#2e2e2e" stroke-width="1.6"/>
<text x="492.6" y="494.3" text-anchor="middle" font-family="Liberation Sans" font-style="italic" font-size="7.6" fill="#3a3a3a">-60</text>
<path d="M512.6 505.5 L513.6 499.6" stroke="#2e2e2e" stroke-width="1.6"/>
<text x="514.4" y="496.6" text-anchor="middle" font-family="Liberation Sans" font-style="italic" font-size="7.6" fill="#3a3a3a">-40</text>
<path d="M533.2 509.9 L534.7 504.1" stroke="#2e2e2e" stroke-width="1.6"/>
<text x="536.2" y="501.3" text-anchor="middle" font-family="Liberation Sans" font-style="italic" font-size="7.6" fill="#3a3a3a">-20</text>
<path d="M420.5 512.9 L419.4 509.5" stroke="#2e2e2e" stroke-width="1.1"/>
<path d="M440.6 507.4 L439.9 504.0" stroke="#2e2e2e" stroke-width="1.1"/>
<path d="M461.0 504.1 L460.6 500.6" stroke="#2e2e2e" stroke-width="1.1"/>
<path d="M481.6 503.0 L481.6 499.5" stroke="#2e2e2e" stroke-width="1.1"/>
<path d="M502.3 504.1 L502.7 500.6" stroke="#2e2e2e" stroke-width="1.1"/>
<path d="M523.0 507.4 L523.7 504.0" stroke="#2e2e2e" stroke-width="1.1"/>
<path d="M543.0 512.8 L544.1 509.4" stroke="#2e2e2e" stroke-width="1.1"/>
<text x="410" y="505" text-anchor="middle" font-family="Liberation Sans" font-style="italic" font-size="7.6" fill="#3a3a3a">-140</text>
<text x="554.5" y="506" text-anchor="middle" font-family="Liberation Sans" font-style="italic" font-size="7.6" fill="#3a3a3a">0</text>
<path d="M407.8 501.7 L424.6 549.5" stroke="#e02418" stroke-width="1.4"/>
<rect x="462.6" y="526.4" width="37.6" height="14.8" rx="3" fill="url(#g3)" stroke="#98aa2c" stroke-width="0.8"/>
<text x="481.4" y="537.6" text-anchor="middle" font-family="Liberation Sans" font-weight="bold" font-size="9.9" fill="#111">-140.0</text>
</svg>
<div style="left:375.8px;top:8.0px;width:4.2px;height:71px;background:#2a8a36;border-left:1px solid #1a5a22;border-right:1px solid #1a5a22"></div>
<div style="left:377.4px;top:10.0px;width:1px;height:67px;background:#6ac86a"></div>
<div class="nw" style="left:370.9px;top:0.5px;width:13.6px;height:8.1px;background:#1c5626;border-radius:2px;text-align:center;font-size:7.5px;line-height:8.5px;color:#eee;font-weight:bold">1</div>
<div style="left:165.0px;top:98.0px;width:760px;height:8px;background:linear-gradient(#6a6a6a,#3a3a3a 45%,#1e1e1e)"></div>
<div style="left:165.0px;top:99.5px;width:760px;height:1.2px;background-image:linear-gradient(90deg,#c8c8c8 1px,transparent 1px);background-size:7.6px 1.2px;background-position:0.5px 0"></div>
<div style="left:165.0px;top:106.0px;width:760px;height:9px;background:#000"></div>
<div style="left:240.7px;top:99.0px;width:1.3px;height:3px;background:#ccc"></div>
<div class="nw" style="left:221.2px;top:104.8px;width:40px;text-align:center;font-size:7.6px;color:#f0f0f0">6.700</div>
<div style="left:316.7px;top:99.0px;width:1.3px;height:3px;background:#ccc"></div>
<div class="nw" style="left:297.2px;top:104.8px;width:40px;text-align:center;font-size:7.6px;color:#f0f0f0">6.800</div>
<div style="left:392.7px;top:99.0px;width:1.3px;height:3px;background:#ccc"></div>
<div class="nw" style="left:373.2px;top:104.8px;width:40px;text-align:center;font-size:7.6px;color:#f0f0f0">6.900</div>
<div style="left:468.7px;top:99.0px;width:1.3px;height:3px;background:#ccc"></div>
<div class="nw" style="left:449.2px;top:104.8px;width:40px;text-align:center;font-size:7.6px;color:#f0f0f0">7.000</div>
<div style="left:544.7px;top:99.0px;width:1.3px;height:3px;background:#ccc"></div>
<div class="nw" style="left:525.2px;top:104.8px;width:40px;text-align:center;font-size:7.6px;color:#f0f0f0">7.100</div>
<div style="left:620.7px;top:99.0px;width:1.3px;height:3px;background:#ccc"></div>
<div class="nw" style="left:601.2px;top:104.8px;width:40px;text-align:center;font-size:7.6px;color:#f0f0f0">7.200</div>
<div style="left:696.7px;top:99.0px;width:1.3px;height:3px;background:#ccc"></div>
<div class="nw" style="left:677.2px;top:104.8px;width:40px;text-align:center;font-size:7.6px;color:#f0f0f0">7.300</div>
<div style="left:772.7px;top:99.0px;width:1.3px;height:3px;background:#ccc"></div>
<div class="nw" style="left:753.2px;top:104.8px;width:40px;text-align:center;font-size:7.6px;color:#f0f0f0">7.400</div>
<div style="left:848.7px;top:99.0px;width:1.3px;height:3px;background:#ccc"></div>
<div class="nw" style="left:829.2px;top:104.8px;width:40px;text-align:center;font-size:7.6px;color:#f0f0f0">7.500</div>
<div style="left:165.0px;top:115.0px;width:760px;height:4px;background:#fafafa"></div>
<div style="left:520.0px;top:116.3px;width:50px;height:1.2px;background-image:linear-gradient(90deg,#333 1.2px,transparent 1.2px);background-size:3px 1.2px"></div>
<div style="left:165.0px;top:119.0px;width:760px;height:80px;background:#000"></div>
<div style="left:377.0px;top:119.0px;width:1px;height:80px;background-image:linear-gradient(#2a8a36 2px,transparent 2px);background-size:1px 3.5px"></div>
<div style="left:379.0px;top:119.0px;width:1px;height:80px;background-image:linear-gradient(#2a8a36 2px,transparent 2px);background-size:1px 3.5px"></div>
<div class="m nw" style="left:498.0px;top:177.0px;font-size:11px;color:#fff;-webkit-text-stroke:0.3px #fff;margin-top:1.5px">Freq:&nbsp; 7.1 MHz</div>
<div style="left:163.0px;top:0;width:2px;height:198px;background:#d8d8d8"></div>
<div style="left:925.0px;top:0;width:28px;height:198px;background:#000;border-left:1px solid #9a9a9a"></div>
<div style="left:926.0px;top:10.4px;width:27px;height:1px;background:#888"></div>
<div class="nw" style="left:931.0px;top:-4px;font-size:9px;color:#ccc">Auto</div>
<div class="nw" style="left:936.0px;top:35.4px;font-size:7.8px;color:#bbb">-20</div>
<div class="nw" style="left:936.0px;top:65.0px;font-size:7.8px;color:#bbb">-40</div>
<div style="left:927.0px;top:98.0px;width:26px;height:95px;background:linear-gradient(#fefefe 0%,#eef2fc 18%,#9aaeea 45%,#3042b0 68%,#10104a 88%,#060620 100%)"></div>
<div style="left:930.0px;top:97.0px;width:23px;height:8px;background:#b0b020;border-radius:0 0 4px 4px"></div>
<div class="nw" style="left:938.0px;top:94.0px;font-size:7.5px;color:#dddd80">-60</div>
<div class="nw" style="left:930.0px;top:121.0px;width:22px;height:14px;background:#7a7a7a;border-radius:3px;text-align:center;font-size:7.5px;line-height:14px;color:#e8e8e8">-80</div>
<div class="nw" style="left:930.0px;top:151.0px;width:22px;height:14px;background:#3a4a80;border-radius:3px;text-align:center;font-size:7.5px;line-height:14px;color:#e8e8e8">-100</div>
<div style="left:930.0px;top:180.0px;width:22px;height:10px;background:#10105a;border-radius:3px"></div>
<div style="left:926.0px;top:186.0px;width:27px;height:1px;background:#fff"></div>
<div class="nw" style="left:935.0px;top:182.0px;font-size:7.5px;color:#ccc">-120</div>
</div>
<div style="left:151px;top:682px;width:48px;height:6px;background:#000"><div style="left:23px;top:0;width:1px;height:6px;background:#555"></div><div style="left:47px;top:0;width:1px;height:6px;background:#555"></div></div>

<!-- ============ TASKBAR ============ -->
<div id="task" style="left:0;top:688px;width:1152px;height:32px;background:#202020">
  <div style="left:0;top:0;width:39px;height:32px;background:#1e2d38"></div>
  <div style="left:39px;top:0;width:230px;height:32px;background:#fff"></div>
  <div class="nw" style="left:71px;top:9.3px;font-size:12px;color:#333">Пошук</div>
<svg style="position:absolute;left:12.5px;top:9px" width="14" height="14"><g fill="#fff"><path d="M0 1.6L5.8 0.9V6.4H0z"/><path d="M6.6 0.8L14 0V6.4H6.6z"/><path d="M0 7.2H5.8V12.9L0 12.2z"/><path d="M6.6 7.2H14V14L6.6 13z"/></g></svg>
<svg style="position:absolute;left:47.5px;top:9px" width="14" height="14"><circle cx="8.5" cy="5.5" r="4.3" fill="none" stroke="#222" stroke-width="1.3"/><path d="M5.4 8.6L0.7 13.3" stroke="#222" stroke-width="1.4"/></svg>
<svg style="position:absolute;left:280.5px;top:9px" width="15" height="14"><g fill="none" stroke="#e8e8e8" stroke-width="1.3"><path d="M0.7 3.5V0.7H10.3V3.5"/><path d="M0.7 10.5V13.3H10.3V10.5"/><rect x="2.7" y="3.5" width="5.6" height="7"/></g><rect x="12.6" y="0" width="1.5" height="1.5" fill="#e8e8e8"/><rect x="12.6" y="3.5" width="1.5" height="10" fill="#e8e8e8"/></svg>
<svg style="position:absolute;left:318.5px;top:5.8px" width="21" height="20" viewBox="0 0 21 20"><defs><linearGradient id="eg1" x1="0" y1="0" x2="1" y2="0.3"><stop offset="0" stop-color="#1a8ad8"/><stop offset="0.6" stop-color="#2fb7d8"/><stop offset="1" stop-color="#5bd16a"/></linearGradient><linearGradient id="eg2" x1="0" y1="0" x2="1" y2="1"><stop offset="0" stop-color="#0c59a8"/><stop offset="1" stop-color="#1e8ad8"/></linearGradient></defs>
<path d="M10.5 0.3C16 0.3 20.5 4 20.5 9c0 3-2.5 4.5-5 4.5-2.5 0-4-1.2-4-2.6 0-.6.4-1 .4-1.9 0-1.8-2-3.2-4.5-3.2C4 5.8 1.2 8.3 0.5 10.5 0.8 4.8 5 0.3 10.5 0.3z" fill="url(#eg1)"/>
<path d="M0.5 10.5C1.2 8.3 4 5.8 7.4 5.8c2.5 0 4.5 1.4 4.5 3.2 0 .9-.4 1.3-.4 1.9 0 1.4 1.5 2.6 4 2.6.9 0 1.6-.2 2.3-.5C16.2 17.2 13.4 19.7 10 19.7 4.6 19.7 0.5 15.6 0.5 10.5z" fill="url(#eg2)"/>
<path d="M7 16.5c-2-1-3-3-3-5 0-2 1.5-3.6 3.6-3.6" fill="none" stroke="#56a8ea" stroke-width="1" opacity="0.6"/></svg>
<svg style="position:absolute;left:359px;top:8.3px" width="18" height="14"><path d="M0 1.2Q0 0 1.2 0H6L7.5 1.6H18V14H0z" fill="#e8b23a"/><rect x="0" y="3" width="18" height="11" fill="#fad668"/><path d="M4 14V9.5H14V14H11.5V11.5H6.5V14z" fill="#3a8ad6"/><rect x="4" y="9.5" width="10" height="2" fill="#5aa6ea"/></svg>
<svg style="position:absolute;left:397.5px;top:6.2px" width="19" height="19"><path d="M6 5V3.5a3.5 3.5 0 0 1 7 0V5" fill="none" stroke="#e8e8e8" stroke-width="1.4"/><rect x="0.5" y="5" width="18" height="13.5" rx="1.2" fill="#f4f4f4"/><rect x="5" y="8" width="4" height="4" fill="#f25022"/><rect x="10" y="8" width="4" height="4" fill="#7fba00"/><rect x="5" y="13" width="4" height="4" fill="#00a4ef"/><rect x="10" y="13" width="4" height="4" fill="#ffb900"/></svg>
<svg style="position:absolute;left:436.6px;top:7.3px" width="20" height="16"><path d="M0 6L10 0L20 6V16H0z" fill="#fafafa"/><path d="M2 6.5L17 3.5L9.5 9L12 14.5z" fill="#111"/><path d="M9.5 9L12 14.5" stroke="#fafafa" stroke-width="0.8"/></svg>
<svg style="position:absolute;left:475.5px;top:6px" width="20" height="20"><path d="M0 1.5Q0 0 1.5 0H17L20 3V18.5Q20 20 18.5 20H1.5Q0 20 0 18.5z" fill="#2e4ec8"/><rect x="4" y="0.8" width="11" height="6" fill="#a8c0f0"/><rect x="10.5" y="1.8" width="2.5" height="4" fill="#2e4ec8"/><rect x="2.5" y="9" width="15" height="10" fill="#f4e6ec"/><g stroke="#e05a78" stroke-width="0.9"><path d="M4 11.5H16M4 14H16M4 16.5H11"/></g><rect x="12.5" y="15.5" width="3.5" height="2.5" fill="#333"/></svg>
<svg style="position:absolute;left:515px;top:6px" width="19" height="18"><rect width="19" height="18" fill="#0a28c8"/><g stroke="#6ad0f0" stroke-width="1"><path d="M0.5 0.5H18.5V17.5H0.5z" fill="none"/><path d="M7 0.5V17.5M12.5 0.5V17.5M0.5 4H18.5"/></g><g stroke="#c0e8ff" stroke-width="0.8"><path d="M2 7H5.5M2 10H5.5M8.5 7H11M14 7H17M8.5 10H11M14 12H17"/></g></svg>
<div style="left:545.5px;top:0;width:37.3px;height:32px;background:#3d3d3d"></div>
<div style="left:545.5px;top:30px;width:37.3px;height:2px;background:#7ab8f0"></div>
<svg style="position:absolute;left:554px;top:6px" width="20" height="19"><rect width="20" height="19" fill="#f4f5fb"/><rect y="11.5" width="20" height="7.5" fill="#aec4ec"/><path d="M1.5 11V3H3.8L7.6 8V3H9.4V11H7.3L3.4 6V11z" fill="#141c72"/><path d="M12.6 11V5.2L11 6.2V4.5L13 3H14.6V11z" fill="#141c72"/><path d="M15.5 11V3H17.2V11z" fill="#141c72"/><path d="M9.6 4.5H12.2M10.9 3.2V5.8" stroke="#e02828" stroke-width="1.1"/><path d="M2 17.5V13L5 15.5L8 13V17.5M11 17.5V13L14 15.5L17 13V17.5" fill="none" stroke="#e03838" stroke-width="1.2"/></svg>
<div style="left:587px;top:30px;width:32px;height:2px;background:#7ab8f0"></div>
<svg style="position:absolute;left:593px;top:6.5px" width="20" height="20"><circle cx="10" cy="10" r="9.6" fill="#c23a3a"/><circle cx="10" cy="10" r="9.6" fill="none" stroke="#d86060" stroke-width="0.6"/><g stroke="#f0d0d0" stroke-width="1" fill="none"><path d="M10 6L6.5 16M10 6L13.5 16M7.8 12H12.2M7 14.5L13 10.5M13 14.5L7 10.5"/><path d="M6.5 5.5a4.5 4.5 0 0 1 7 0M5 3.8a6.8 6.8 0 0 1 10 0"/></g><circle cx="10" cy="6" r="1" fill="#f0d0d0"/></svg>
<svg style="position:absolute;left:830px;top:7px" width="21" height="18"><path d="M9.5 0.5a4.5 4.5 0 1 0 4 6.6A3.6 3.6 0 0 1 9.5 0.5z" fill="#f2c040"/><path d="M4 17.5a4 4 0 0 1 -0.5-8a5.5 5.5 0 0 1 10.5-1.5a4.2 4.2 0 0 1 3.5 9.5z" fill="#b8d4f4"/><path d="M4 17.5a4 4 0 0 1 -0.5-8" fill="none" stroke="#90b4e0" stroke-width="0.6"/></svg>
<div class="nw" style="left:856px;top:10.2px;font-size:10.3px;color:#fff">14°C</div>
<div class="nw" style="left:887px;top:10.2px;font-size:11.3px;color:#fff">Mostly cloudy</div>
<svg style="position:absolute;left:975.5px;top:12px" width="10" height="7"><path d="M0.7 6L5 1.5L9.3 6" stroke="#fff" stroke-width="1.3" fill="none"/></svg>
<svg style="position:absolute;left:997px;top:9px" width="13" height="13"><g fill="none" stroke="#e8e8e8" stroke-width="1.1"><path d="M1.5 11.5A10 10 0 0 1 11.5 1.5"/><path d="M4 11.5A7.5 7.5 0 0 1 11.5 4"/><path d="M6.5 11.5A5 5 0 0 1 11.5 6.5"/></g><circle cx="10.5" cy="10.5" r="1.3" fill="#e8e8e8"/></svg>
<svg style="position:absolute;left:1012px;top:9px" width="13" height="14"><path d="M1 4.5H4L8 1V13L4 9.5H1z" fill="none" stroke="#e8e8e8" stroke-width="1.1"/><path d="M9.8 4.5a3 3 0 0 1 0 5M11.5 2.5a6 6 0 0 1 0 9" fill="none" stroke="#e8e8e8" stroke-width="1"/></svg>
<div class="nw" style="left:1032.5px;top:11px;font-size:8.9px;color:#fff">ENG</div>
<div class="nw" style="left:1060px;top:1.8px;width:46px;text-align:center;font-size:9px;line-height:14px;color:#fff">23:27<br>30.04.2024</div>
<svg style="position:absolute;left:1116px;top:7px" width="18" height="19"><path d="M1 1H15V11H6L3 14V11H1z" fill="none" stroke="#fff" stroke-width="1.2"/><path d="M3.5 4H12.5M3.5 6.5H12.5M3.5 9H9" stroke="#fff" stroke-width="1"/><circle cx="12.5" cy="13" r="5" fill="#202020" stroke="#bbb" stroke-width="1"/><text x="12.5" y="16" text-anchor="middle" font-family="Liberation Sans" font-weight="bold" font-size="8" fill="#fff">1</text></svg>
<div style="left:1147px;top:0;width:1px;height:32px;background:#555"></div>
</div>

</body></html>
